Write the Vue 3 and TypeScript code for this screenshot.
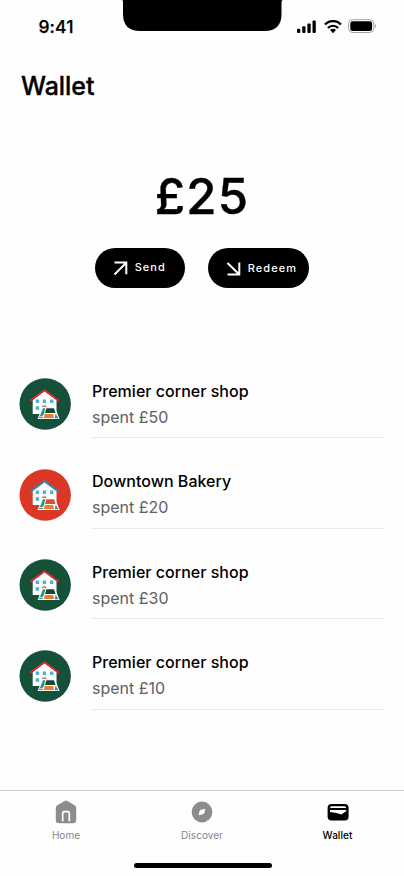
<script setup lang="ts">
interface Payment {
  id: number
  name: string
  amount: number
  background: string
  roof: string
  awning: string
}

const payments: Payment[] = [
  { id: 1, name: 'Premier corner shop', amount: 50, background: '#155038', roof: '#dc2632', awning: '#174634' },
  { id: 2, name: 'Downtown Bakery', amount: 20, background: '#dc3726', roof: '#3089b5', awning: '#d4552b' },
  { id: 3, name: 'Premier corner shop', amount: 30, background: '#155038', roof: '#dc2632', awning: '#174634' },
  { id: 4, name: 'Premier corner shop', amount: 10, background: '#155038', roof: '#dc2632', awning: '#174634' },
]
</script>

<template>
  <div class="screen">
    <header class="status">
      <div class="time">9:41</div>
      <div class="notch">
        <svg width="161" height="31" viewBox="0 0 161 31"><path d="M0 0H161Q159.500 0 159.500 2V14Q159.500 31 142.500 31H18Q1 31 1 14V2Q1 0 0 0Z" /></svg>
      </div>
      <div class="indicators">
        <svg width="20" height="14" viewBox="0 0 20 14">
          <rect x="0" y="8.800" width="3.300" height="4.200" rx="1" />
          <rect x="5.200" y="6.300" width="3.300" height="6.700" rx="1" />
          <rect x="10.400" y="3.400" width="3.300" height="9.600" rx="1" />
          <rect x="15.500" y=".5" width="3.300" height="12.500" rx="1" />
        </svg>
        <svg class="wifi" width="18" height="14" viewBox="0 0 18 14">
          <path d="M1 4.600C5.400-.1 12.600-.1 17 4.600M3.900 7.900C6.700 5 11.300 5 14.100 7.900" fill="none" stroke="#000" stroke-width="2.200" />
          <path d="M6 10.100Q9 7.500 12 10.100L9 13.200Z" />
        </svg>
        <svg class="battery" width="29" height="15" viewBox="0 0 29 15">
          <rect x=".6" y=".7" width="25.200" height="12.800" rx="4" fill="#fff" stroke="#a2a2a2" />
          <rect x="2.300" y="2.200" width="21.800" height="9.900" rx="2.500" />
          <path d="M27 5Q29.700 7.100 27 9.200Z" fill="#aaa" />
        </svg>
      </div>
    </header>

    <h1>Wallet</h1>

    <section class="balance">
      <div class="amount">£25</div>
      <div class="actions">
        <button class="send">
          <svg width="15" height="15" viewBox="0 0 15 15"><path d="M1.500 13.500L13 2M1.500 1.500H13.300V13.300" /></svg>
          <span>Send</span>
        </button>
        <button class="redeem">
          <svg width="15" height="15" viewBox="0 0 15 15"><path d="M1.500 2L13 13.300M13.300 1.500V13.400H1.500" /></svg>
          <span>Redeem</span>
        </button>
      </div>
    </section>

    <ul class="payments">
      <li v-for="p in payments" :key="p.id">
        <svg class="avatar" viewBox="0 0 52 52">
          <circle cx="26.200" cy="26" r="25.700" :fill="p.background" />
          <path d="M25.500 13L37.500 22V36H13.700V22Z" fill="#fff" />
          <path d="M11.200 22.800L25.500 12.300L39.800 22.800" fill="none" :stroke="p.roof" stroke-width="2" />
          <path d="M16.700 21.400h3.400v3.500h-3.400zM23.700 21.400h3.400v3.500h-3.400zM31 21.400h3.400v3.500h-3.400zM16.700 28.300h3.400v3.500h-3.400z" fill="#50b1d3" />
          <path d="M23.200 29.500H36L40.600 41H18.500Z" fill="#fff" />
          <path d="M23.900 30.300H26.400L24.400 37.500L22.500 38H20.900Z" fill="#28957e" />
          <path d="M23.300 29Q25.300 26.800 27.300 29" fill="none" stroke="#bd633b" stroke-width="1.200" />
          <path d="M27.400 30.300H35L36.500 35H26Z" :fill="p.awning" />
          <path d="M25.900 36H34.200L35 40.100H24.900Z" fill="#ec7c2e" />
          <path d="M20.300 38.800H24L23.600 40H19.800Z" fill="#3293a0" />
          <path d="M36.700 35.400L39.300 40.200H35.700Z" fill="#278cae" />
        </svg>
        <div class="details">
          <div class="name">{{ p.name }}</div>
          <div class="spent">spent £{{ p.amount }}</div>
        </div>
      </li>
    </ul>

    <nav>
      <a class="tab">
        <svg width="24" height="24" viewBox="0 0 24 24">
          <path d="M10.600.9Q12 .1 13.400.9L20.600 5.200Q22.200 6.200 22.200 8V20Q22.200 23.300 19 23.300H5Q1.800 23.300 1.800 20V8Q1.800 6.200 3.400 5.200Z" fill="#8c8c8c" />
          <path d="M8.700 21.200V13.300Q8.700 11.700 10.300 11.700H13.700Q15.300 11.700 15.300 13.300V21.200" fill="none" stroke="#fff" stroke-width="1.700" />
        </svg>
        <span>Home</span>
      </a>
      <a class="tab">
        <svg width="24" height="24" viewBox="0 0 24 24">
          <circle cx="12" cy="12" r="10.400" fill="#8c8c8c" />
          <path d="M15.300 8.700L14.500 12.500Q14.200 13.800 13 14.200L8.700 15.300L9.500 11.500Q9.800 10.200 11 9.800Z" fill="#fff" />
        </svg>
        <span>Discover</span>
      </a>
      <a class="tab active">
        <svg width="24" height="24" viewBox="0 0 24 24">
          <rect x="1.600" y="4" width="21" height="16.400" rx="4" />
          <path d="M5.500 6.300H18.500Q20.200 6.300 20.200 8H4Q4 6.300 5.500 6.300ZM4 10.100H20.200V11.300L15.300 14.600L10.500 13.100L4 12Z" fill="#fff" />
        </svg>
        <span>Wallet</span>
      </a>
    </nav>
    <div class="home-indicator"></div>
  </div>
</template>

<style>
body { background: #fff; }
</style>

<style scoped>
* { box-sizing: border-box; }
.screen {
  display: flex;
  flex-direction: column;
  width: 404px;
  height: 876px;
  overflow: hidden;
  background: #fefefe;
  color: #000;
  font-family: Inter, "Liberation Sans", sans-serif;
}
svg { display: block; flex: none; }
.status { display: flex; height: 60px; }
.time { width: 122px; padding: 17px 0 0 38.5px; font-size: 17.500px; line-height: 20px; font-weight: 500; letter-spacing: .1px; -webkit-text-stroke: .25px #000; }
.indicators { display: flex; padding: 20px 0 0 14px; }
.wifi { margin-left: 7px; }
.battery { margin-left: 6px; margin-top: -1px; }
h1 { margin: 10px 0 0 21px; font-size: 25px; line-height: 32px; font-weight: 500; letter-spacing: -.05px; -webkit-text-stroke: .35px #000; }
.balance { display: flex; flex-direction: column; align-items: center; height: 264px; padding-top: 65px; }
.amount { font-size: 49px; line-height: 60px; font-weight: 500; letter-spacing: 1.200px; -webkit-text-stroke: .4px #000; }
.actions { display: flex; gap: 23px; margin: 21px 0 0 .5px; }
button {
  display: flex;
  align-items: center;
  height: 40px;
  padding: 0;
  border: 0;
  border-radius: 20px;
  background: #000;
  color: #fff;
  font: 500 11px/16px Inter, sans-serif;
  letter-spacing: 1px;
}
button svg { fill: none; stroke: #fff; stroke-width: 2; }
.send { width: 90px; padding-left: 17.500px; }
.send span { margin: -3px 0 0 7px; }
.redeem { width: 101px; padding-left: 18px; }
.redeem svg { margin-top: 1px; }
.redeem span { margin-left: 6.500px; letter-spacing: 1.050px; }
.payments { margin: 0; padding: 0 20px 0 19px; list-style: none; }
li { display: flex; height: 90.500px; padding-top: 12px; }
.avatar { width: 52px; height: 52px; }
.details { flex: 1; height: 60px; margin-left: 21px; border-bottom: 1px solid #e9e9e9; }
.name { margin-top: -.300px; font-size: 16px; line-height: 26px; font-weight: 500; letter-spacing: .02px; }
.spent { color: #606060; font-size: 16px; line-height: 26px; }
nav { display: flex; height: 63px; margin-top: 62px; padding: 0; border-top: 1px solid #c8c8c8; }
.tab { display: flex; flex: none; flex-direction: column; align-items: center; width: 136px; padding-top: 9px; color: #858585; }
.tab:first-child { width: 132px; margin-right: 2px; }
.tab span { margin-top: 5px; font-size: 10px; line-height: 12px; letter-spacing: .05px; }
.tab.active { width: 135px; color: #000; }
.active span { font-weight: 500; }
.home-indicator { width: 138px; height: 5px; margin: 9.500px 0 0 133.500px; border-radius: 3px; background: #000; }
</style>
